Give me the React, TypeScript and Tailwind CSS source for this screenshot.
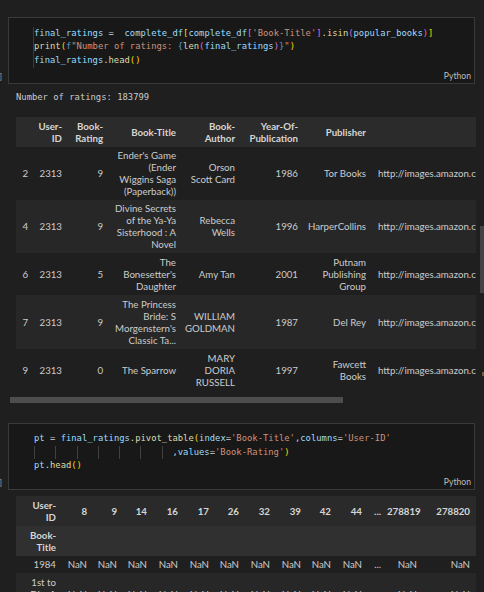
import React from "react";

const C = {
  v: "text-[#9cdcfe]",
  w: "text-[#d4d4d4]",
  f: "text-[#dcdcaa]",
  s: "text-[#ce9178]",
  b1: "text-[#ffd700]",
  b2: "text-[#da70d6]",
  k: "text-[#569cd6]",
};

type Tok = [string, keyof typeof C];

const MONO = "font-[family-name:'DejaVu_Sans_Mono',monospace] text-[8.85px]";
const SANS = "font-[family-name:Lato,'Liberation_Sans',sans-serif]";

function Line({ toks, pre }: { toks: Tok[]; pre?: React.ReactNode }) {
  return (
    <div className="h-[13.6px] leading-[13.6px] whitespace-pre flex items-stretch">
      {pre}
      <span>
        {toks.map(([t, c], i) => (
          <span key={i} className={C[c]}>
            {t}
          </span>
        ))}
      </span>
    </div>
  );
}

function Guides() {
  return (
    <>
      {[0, 1, 2, 3, 4, 5].map((i) => (
        <span key={i} className="inline-block w-[4ch] h-[13.6px] border-l border-[#404040]" />
      ))}
      <span className="inline-block w-[2ch] h-[13.6px] border-l border-[#404040]" />
    </>
  );
}

function Cell({ children, leftLine }: { children: React.ReactNode; leftLine?: boolean }) {
  return (
    <div className="flex">
      <div className={`w-[8px] flex flex-col justify-end pb-[1px] text-[#8a8a8a] text-[8.85px] leading-[12px] ${MONO}`}>
        <span className="-ml-[2px]">]</span>
      </div>
      <div className="w-[467px] h-[67px] border border-[#3a3a3a] bg-[#181818] flex flex-col">
        <div className={`pl-[25px] pt-[8.5px] ${MONO}`}>
          <div className={leftLine ? "-ml-[1px] border-l border-[#3a3a3a] pb-[1px]" : ""}>{children}</div>
        </div>
        <div className={`mt-auto self-end pr-[3px] pb-[1px] text-[8.6px] leading-[12px] text-[#bcbcbc] ${SANS}`}>Python</div>
      </div>
    </div>
  );
}

type CellV = string | string[];

function TC({ v, bold, left }: { v: CellV; bold?: boolean; left?: boolean }) {
  const lines = Array.isArray(v) ? v : [v];
  return (
    <div className={`${left ? "pl-[6px] text-left" : "pr-[6px] text-right"} whitespace-nowrap overflow-hidden ${bold ? "font-bold text-[#d6d6d6]" : ""}`}>
      {lines.map((l, i) => (
        <div key={i}>{l === "" ? "\u00a0" : l}</div>
      ))}
    </div>
  );
}

const URL = "http://images.amazon.com/images/P/0812550706.01.MZZZZZZZ.jpg";

const rows1: { h: string; bg: string; cells: CellV[] }[] = [
  { h: "h-[53px]", bg: "", cells: ["2", "2313", "9", ["Ender's Game", "(Ender", "Wiggins Saga", "(Paperback))"], ["Orson", "Scott Card"], "1986", "Tor Books"] },
  { h: "h-[53px]", bg: "bg-[#272727]", cells: ["4", "2313", "9", ["Divine Secrets", "of the Ya-Ya", "Sisterhood : A", "Novel"], ["Rebecca", "Wells"], "1996", "HarperCollins"] },
  { h: "h-[42px]", bg: "", cells: ["6", "2313", "5", ["The", "Bonesetter's", "Daughter"], "Amy Tan", "2001", ["Putnam", "Publishing", "Group"]] },
  { h: "h-[54px]", bg: "bg-[#272727]", cells: ["7", "2313", "9", ["The Princess", "Bride: S", "Morgenstern's", "Classic Ta..."], ["WILLIAM", "GOLDMAN"], "1987", "Del Rey"] },
  { h: "h-[43px]", bg: "", cells: ["9", "2313", "0", "The Sparrow", ["MARY", "DORIA", "RUSSELL"], "1997", ["Fawcett", "Books"]] },
];

const G1 = "grid grid-cols-[18px_34px_41px_73px_59px_63px_68px_260px] items-center";
const G2 = "grid grid-cols-[46px_31px_30px_30px_31px_31px_30px_31px_31px_30px_31px_19px_36px_53px] items-center";

const cols2 = ["8", "9", "14", "16", "17", "26", "32", "39", "42", "44", "...", "278819", "278820"];

export default function App() {
  return (
    <div className="relative w-[484px] h-[592px] overflow-hidden bg-[#1f1f1f] text-[#cccccc]">
      <div className="pt-[17px]">
        <Cell leftLine>
          <Line
            toks={[
              ["final_ratings", "v"],
              [" =  ", "w"],
              ["complete_df", "v"],
              ["[", "b1"],
              ["complete_df", "v"],
              ["[", "b2"],
              ["'Book-Title'", "s"],
              ["]", "b2"],
              [".", "w"],
              ["isin", "f"],
              ["(", "b2"],
              ["popular_books", "v"],
              [")", "b2"],
              ["]", "b1"],
            ]}
          />
          <Line
            toks={[
              ["print", "f"],
              ["(", "b1"],
              ["f", "k"],
              ['"Number of ratings: ', "s"],
              ["{", "k"],
              ["len", "f"],
              ["(", "b2"],
              ["final_ratings", "v"],
              [")", "b2"],
              ["}", "k"],
              ['"', "s"],
              [")", "b1"],
            ]}
          />
          <Line
            toks={[
              ["final_ratings", "v"],
              [".", "w"],
              ["head", "f"],
              ["()", "b1"],
            ]}
          />
        </Cell>

        <div className={`pl-[16px] mt-[7px] h-[13.6px] leading-[13.6px] text-[#cccccc] whitespace-pre ${MONO}`}>Number of ratings: 183799</div>

        <div className={`ml-[16px] mt-[12px] w-[460px] overflow-hidden text-[9.7px] leading-[12px] ${SANS}`}>
          <div className={`${G1} h-[30px] bg-[#2b2b2b] w-max`}>
            <TC v="" bold />
            <TC v={["User-", "ID"]} bold />
            <TC v={["Book-", "Rating"]} bold />
            <TC v="Book-Title" bold />
            <TC v={["Book-", "Author"]} bold />
            <TC v={["Year-Of-", "Publication"]} bold />
            <TC v="Publisher" bold />
            <TC v="" bold />
          </div>
          {rows1.map((r, i) => (
            <div key={i} className={`${G1} ${r.h} ${r.bg} w-max`}>
              {r.cells.map((c, j) => (
                <TC key={j} v={c} />
              ))}
              <TC v={URL} left />
            </div>
          ))}
        </div>

        <div className="ml-[10px] mt-[5px] w-[333px] h-[6px] bg-[#4d4d4d]" />

        <div className="mt-[20px]">
          <Cell>
            <Line
              toks={[
                ["pt", "v"],
                [" = ", "w"],
                ["final_ratings", "v"],
                [".", "w"],
                ["pivot_table", "f"],
                ["(", "b1"],
                ["index", "v"],
                ["=", "w"],
                ["'Book-Title'", "s"],
                [",", "w"],
                ["columns", "v"],
                ["=", "w"],
                ["'User-ID'", "s"],
              ]}
            />
            <Line
              pre={<Guides />}
              toks={[
                [",", "w"],
                ["values", "v"],
                ["=", "w"],
                ["'Book-Rating'", "s"],
                [")", "b1"],
              ]}
            />
            <Line
              toks={[
                ["pt", "v"],
                [".", "w"],
                ["head", "f"],
                ["()", "b1"],
              ]}
            />
          </Cell>
        </div>

        <div className={`ml-[16px] mt-[6px] w-[460px] overflow-hidden text-[9.7px] leading-[12px] ${SANS}`}>
          <div className={`${G2} h-[30px] bg-[#2a2a2a]`}>
            <TC v={["User-", "ID"]} bold />
            {cols2.map((c, i) => (
              <TC key={i} v={c} bold />
            ))}
          </div>
          <div className={`${G2} h-[30px] bg-[#303030]`}>
            <TC v={["Book-", "Title"]} bold />
            {cols2.map((_, i) => (
              <TC key={i} v="" />
            ))}
          </div>
          <div className={`${G2} h-[17px]`}>
            <TC v="1984" />
            {cols2.map((c, i) => (
              <TC key={i} v={c === "..." ? "..." : "NaN"} />
            ))}
          </div>
          <div className={`${G2} h-[42px] bg-[#272727]`}>
            <TC v={["1st to", "Die: A", "Novel"]} />
            {cols2.map((c, i) => (
              <TC key={i} v={c === "..." ? "..." : "NaN"} />
            ))}
          </div>
        </div>
      </div>

      <div className="absolute left-[480px] top-[226px] w-[4px] h-[67px] bg-[#434343]" />
      <div className="absolute left-[482px] top-[372px] w-[2px] h-[4px] bg-[#6e5a3c]" />
    </div>
  );
}
